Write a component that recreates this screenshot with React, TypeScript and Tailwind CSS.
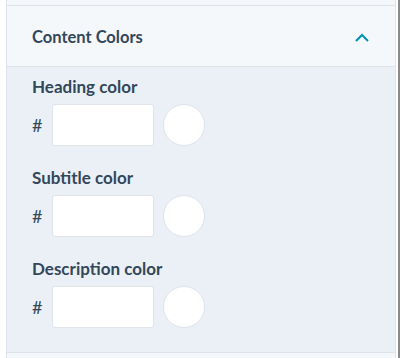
import React from "react";

function ColorField({ label }: { label: string }) {
  return (
    <div className="flex flex-col">
      <div className="text-[17px] font-bold leading-[20px] text-[#33475b]">{label}</div>
      <div className="mt-[7px] flex items-center">
        <span className="w-[20px] text-[18px] leading-none text-[#33475b]">#</span>
        <div className="h-[42px] w-[102px] rounded-[3px] border border-[#dfe3eb] bg-white" />
        <div className="ml-[9px] h-[42px] w-[42px] rounded-full border border-[#dfe3eb] bg-white" />
      </div>
    </div>
  );
}

export default function App() {
  return (
    <div
      className="flex h-[358px] w-[400px] bg-white"
      style={{ fontFamily: "Lato, 'Noto Sans', sans-serif" }}
    >
      <div className="ml-[6px] flex w-[390px] flex-col border-x border-[#dfe3eb] bg-[#f5f8fa]">
        <div className="h-[6px] border-b border-[#dfe3eb]" />
        <div className="flex h-[61px] items-center justify-between border-b border-[#dfe3eb] pl-[25px] pr-[26px] pt-[3px]">
          <span className="text-[16.5px] font-bold text-[#33475b]">Content Colors</span>
          <svg width="14" height="9" viewBox="0 0 14 9" fill="none">
            <path d="M1 8 L7 2 L13 8" stroke="#0091ae" strokeWidth="2" />
          </svg>
        </div>
        <div className="flex h-[286px] flex-col gap-[22px] border-b border-[#dfe3eb] bg-[#eaf0f6] pl-[25px] pt-[10px]">
          <ColorField label="Heading color" />
          <ColorField label="Subtitle color" />
          <ColorField label="Description color" />
        </div>
        <div className="flex-1 bg-[#f5f8fa]" />
      </div>
      <div className="ml-[2px] w-[2px] bg-[#8a8a8a]" />
    </div>
  );
}
